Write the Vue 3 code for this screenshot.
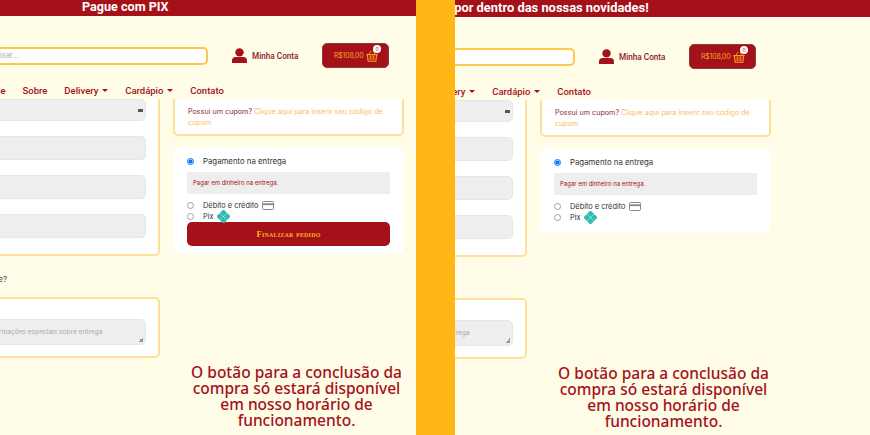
<template>
  <div class="shot">
    <section
      v-for="panel in panels"
      :key="panel.id"
      class="panel"
      :class="'panel-' + panel.id"
    >
      <div class="topbar">
        <span class="banner">{{ panel.banner }}</span>
      </div>

      <div class="page">
        <header class="head">
          <input class="search" type="text" placeholder="Pesquisar..." />
          <a class="account">
            <svg width="15" height="15" viewBox="0 0 15 15">
              <circle cx="7.5" cy="4.4" r="4.2" fill="#a51118" />
              <path
                d="M0 15v-2.6C0 10.2 1.6 9 3.6 9h7.8c2 0 3.6 1.2 3.6 3.4V15z"
                fill="#a51118"
              />
            </svg>
            <span>Minha Conta</span>
          </a>
          <div class="cart">
            <span class="cart-total">R$108,00</span>
            <svg width="12" height="12" viewBox="0 0 12 12" fill="none" stroke="#ff9d1c">
              <path d="M0.3 4.6h11.4M1.3 4.6l0.9 6.6h7.6l0.9-6.6" stroke-width="1.1" />
              <path d="M2.8 4.4L5 0.8M9.2 4.4L7 0.8" stroke-width="0.9" />
              <path d="M3 7h6M3 9h6M4.6 5.4v5M7.4 5.4v5" stroke-width="0.7" />
            </svg>
            <span class="cart-badge">0</span>
          </div>
        </header>

        <nav class="menu">
          <a v-for="item in menu" :key="item.label" class="menu-item">
            {{ item.label }}
            <i v-if="item.caret" class="caret"></i>
          </a>
        </nav>

        <main class="checkout">
          <div class="form-col">
            <div class="card fields">
              <div class="field select">
                <i class="spin"></i>
              </div>
              <input class="field" type="text" />
              <input class="field" type="text" />
              <input class="field" type="text" />
            </div>
            <p class="question">Alguma informação importante?</p>
            <div class="card notes">
              <textarea
                class="notes-input"
                placeholder="Informações especiais sobre entrega"
              ></textarea>
            </div>
          </div>

          <div class="side-col">
            <div class="card coupon">
              Possui um cupom?
              <a class="coupon-link">Clique aqui para inserir seu código de cupom</a>
            </div>

            <div class="pay">
              <label class="pay-row first">
                <input type="radio" :name="'pay-' + panel.id" checked />
                <span>Pagamento na entrega</span>
              </label>
              <div class="pay-info">Pagar em dinheiro na entrega.</div>
              <label class="pay-row second">
                <input type="radio" :name="'pay-' + panel.id" />
                <span>Débito e crédito</span>
                <svg class="card-icon" width="12" height="9" viewBox="0 0 12 9" fill="none" stroke="#888">
                  <rect x="0.5" y="0.5" width="11" height="8" rx="1" />
                  <path d="M0.5 3.2h11" stroke-width="1.8" />
                </svg>
              </label>
              <label class="pay-row">
                <input type="radio" :name="'pay-' + panel.id" />
                <span>Pix</span>
                <svg class="pix-icon" width="13" height="13" viewBox="0 0 13 13" fill="#32bcad">
                  <rect x="4" y="0.4" width="5" height="5" rx="0.8" transform="rotate(45 6.5 2.9)" />
                  <rect x="4" y="7.6" width="5" height="5" rx="0.8" transform="rotate(45 6.5 10.1)" />
                  <rect x="0.4" y="4" width="5" height="5" rx="0.8" transform="rotate(45 2.9 6.5)" />
                  <rect x="7.6" y="4" width="5" height="5" rx="0.8" transform="rotate(45 10.1 6.5)" />
                </svg>
              </label>
              <button v-if="panel.button" class="finish" type="button">
                Finalizar pedido
              </button>
            </div>

            <p class="note">
              O botão para a conclusão da compra só estará disponível em nosso
              horário de funcionamento.
            </p>
          </div>
        </main>
      </div>
    </section>
  </div>
</template>

<script setup>
const panels = [
  { id: "left", banner: "Pague com PIX", button: true },
  { id: "right", banner: "Fique por dentro das nossas novidades!", button: false },
];

const menu = [
  { label: "Home" },
  { label: "Sobre" },
  { label: "Delivery", caret: true },
  { label: "Cardápio", caret: true },
  { label: "Contato" },
];
</script>

<style>
html,
body {
  margin: 0;
  background: #fffce8;
}
</style>

<style scoped>
.shot {
  display: flex;
  width: 870px;
  height: 435px;
  overflow: hidden;
  font-family: Inter, "Open Sans", sans-serif;
}

.panel {
  flex: none;
  height: 435px;
  overflow: hidden;
  background: #fffce8;
}

.panel-left {
  width: 416px;
}

.panel-right {
  width: 415px;
  border-left: 39px solid #ffb617;
}

.topbar {
  height: 16px;
  background: #a51118;
  color: #fff;
  font-family: Roboto, sans-serif;
  font-size: 12.6px;
  font-weight: 700;
  line-height: 13px;
  white-space: nowrap;
}

.panel-left .banner {
  margin-left: 82px;
}

.panel-right .topbar {
  height: 17px;
  font-size: 12.9px;
  line-height: 15px;
}

.panel-right .banner {
  margin-left: -36px;
}

/* both panels show the same page, scrolled to a different spot */
.page {
  width: 524px;
}

.panel-left .page {
  margin-left: -120px;
}

.panel-right .page {
  margin-left: -208px;
}

.head {
  display: flex;
  align-items: center;
  gap: 24px;
  width: 509px;
  height: 25px;
  margin-top: 27px;
}

.search {
  box-sizing: border-box;
  width: 328px;
  height: 18px;
  padding: 0 0 0 96px;
  border: 2px solid #fcc94d;
  border-radius: 5px;
  background: #fff;
  font: 7.5px Inter, sans-serif;
  outline: none;
}

.search::placeholder {
  color: #aaa;
}

.account {
  display: flex;
  align-items: center;
  gap: 5px;
  width: 66px;
  color: #8c1b20;
  font-family: Roboto, sans-serif;
  font-size: 8.2px;
  font-weight: 500;
  white-space: nowrap;
}

.account svg {
  flex: none;
}

.cart {
  position: relative;
  box-sizing: border-box;
  display: flex;
  align-items: center;
  gap: 2px;
  width: 67px;
  height: 25px;
  padding-left: 11px;
  border: 1px solid #8d3a3e;
  border-radius: 5px;
  background: #a51118;
  color: #f5a02d;
}

.cart svg {
  flex: none;
}

.cart-total {
  font-size: 7px;
  letter-spacing: -0.2px;
  white-space: nowrap;
}

.cart-badge {
  position: absolute;
  top: 1px;
  right: 7px;
  width: 8px;
  height: 8px;
  border-radius: 50%;
  background: #fff;
  color: #a51118;
  font-size: 5px;
  line-height: 8px;
  text-align: center;
}

.menu {
  display: flex;
  align-items: center;
  gap: 17px;
  height: 18px;
  margin-top: 13px;
  padding-left: 100px;
  color: #a51118;
  font-family: Roboto, sans-serif;
  font-size: 9.5px;
  font-weight: 500;
}

.menu-item {
  white-space: nowrap;
}

.caret {
  display: inline-block;
  margin-left: 1.5px;
  border-top: 3px solid #a51118;
  border-right: 3px solid transparent;
  border-left: 3px solid transparent;
  vertical-align: 2px;
}

.checkout {
  display: grid;
  grid-template-columns: 280px 231px;
  gap: 13px;
  height: 329px;
  overflow: hidden;
}

.card {
  box-sizing: border-box;
  border: 2px solid #ffe09b;
  border-radius: 5px;
  background: #fff;
}

.fields {
  display: flex;
  flex-direction: column;
  gap: 15px;
  height: 165px;
  margin-top: -8px;
  padding: 6px 12px 0 0;
}

.field {
  box-sizing: border-box;
  flex: none;
  width: 100%;
  height: 24px;
  margin: 0;
  padding: 0;
  border: 1px solid #e6e6e6;
  border-radius: 5px;
  background: #eee;
}

.select {
  position: relative;
  height: 22px;
}

.spin {
  position: absolute;
  top: 9px;
  right: 2px;
  width: 5px;
  height: 3px;
  background: #555;
}

.question {
  height: 10px;
  margin: 18px 0 0;
  padding-right: 153px;
  color: #444;
  font-size: 8px;
  line-height: 10px;
  text-align: right;
  white-space: nowrap;
}

.notes {
  height: 61px;
  margin-top: 13px;
  padding: 20px 12px 0 0;
}

.notes-input {
  box-sizing: border-box;
  display: block;
  width: 100%;
  height: 26px;
  margin: 0;
  padding: 8px 0 0 104px;
  border: 1px solid #e6e6e6;
  border-radius: 5px;
  background: #eee linear-gradient(135deg, transparent 50%, #999 50%) no-repeat right 2px bottom 2px / 5px 5px;
  font: 6.6px Inter, sans-serif;
  outline: none;
  resize: none;
}

.notes-input::placeholder {
  color: #aaa;
}

.side-col {
  display: flex;
  flex-direction: column;
}

.coupon {
  height: 45px;
  margin-top: -8px;
  padding: 14px 13px 0;
  color: #8c2a36;
  font-size: 7.2px;
  line-height: 10.5px;
}

.coupon-link {
  color: #fbbd5e;
}

.pay {
  margin-top: 12px;
  padding: 8px 14px 7px;
  border-radius: 6px;
  background: #fff;
}

.panel-right .pay {
  padding-bottom: 10px;
}

.pay-row {
  display: flex;
  align-items: center;
  height: 10px;
  margin-top: 1px;
  color: #333;
  font-size: 7.4px;
  white-space: nowrap;
}

.pay-row.first {
  margin-top: 0;
  font-size: 7.8px;
}

.pay-row.second {
  margin-top: 6px;
}

.pay-row input {
  flex: none;
  width: 7px;
  height: 7px;
  margin: 0 9px 0 0;
}

.pay-row input:not(:checked) {
  opacity: 0.7;
}

.card-icon {
  margin-left: 4px;
}

.pix-icon {
  margin-left: 3px;
}

.pay-info {
  height: 22px;
  margin-top: 6px;
  padding-left: 6px;
  background: #eee;
  color: #a51118;
  font-size: 6px;
  line-height: 22px;
}

.finish {
  display: block;
  width: 100%;
  height: 24px;
  margin-top: 1px;
  padding: 0;
  border: 0;
  border-radius: 5px;
  background: #a51118;
  color: #ffb31a;
  font-family: "Liberation Serif", serif;
  font-size: 8.8px;
  font-weight: 700;
  font-variant: small-caps;
  letter-spacing: 0.2px;
}

.note {
  margin: auto 0 0 16px;
  color: #a51118;
  font-family: "Noto Sans", sans-serif;
  font-size: 15.5px;
  font-weight: 500;
  line-height: 16px;
  text-align: center;
}
</style>
